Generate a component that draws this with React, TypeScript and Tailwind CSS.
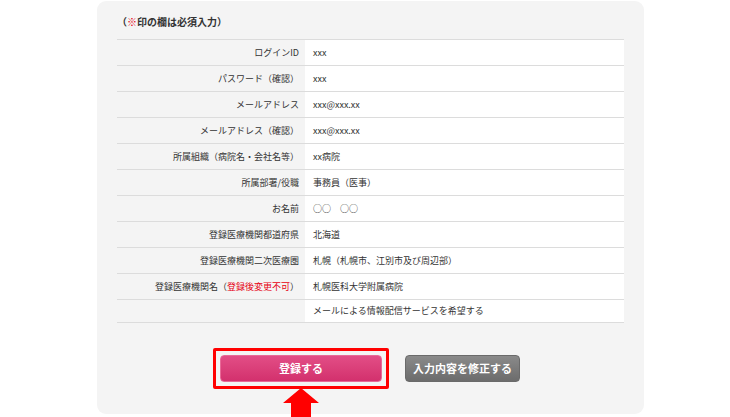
const rows: { label: React.ReactNode; value: string; h?: string }[] = [
  { label: "ログインID", value: "xxx" },
  { label: "パスワード（確認）", value: "xxx" },
  { label: "メールアドレス", value: "xxx@xxx.xx" },
  { label: "メールアドレス（確認）", value: "xxx@xxx.xx" },
  { label: "所属組織（病院名・会社名等）", value: "xx病院" },
  { label: "所属部署/役職", value: "事務員（医事）" },
  { label: "お名前", value: "○○　○○" },
  { label: "登録医療機関都道府県", value: "北海道" },
  { label: "登録医療機関二次医療圏", value: "札幌（札幌市、江別市及び周辺部）" },
  {
    label: (
      <>
        登録医療機関名（<span className="text-[#e60012]">登録後変更不可</span>）
      </>
    ),
    value: "札幌医科大学附属病院",
  },
  { label: "", value: "メールによる情報配信サービスを希望する", h: "h-[23px]" },
];

export default function App() {
  return (
    <div
      className="relative h-[417px] w-[730px] overflow-hidden bg-white text-[#333]"
      style={{ fontFamily: '"Noto Sans CJK JP", "Noto Sans", sans-serif' }}
    >
      <div className="ml-[97px] mt-px flex w-[547px] flex-col rounded-[9px] bg-[#f4f4f4] px-5 pb-[25px] pt-[14px]">
        <p className="text-[10px] font-bold leading-[14px]">
          （<span className="text-[#e60012]">※</span>印の欄は必須入力）
        </p>
        <div className="mt-[10px] border-t border-[#dcdcdc]">
          {rows.map((r, i) => (
            <div
              key={i}
              className={`grid grid-cols-[188px_1fr] border-b border-[#dcdcdc] text-[9px] ${r.h ?? "h-[26px]"}`}
            >
              <div className="flex items-center justify-end pr-[6px]">{r.label}</div>
              <div className="flex items-center bg-white pl-2">{r.value}</div>
            </div>
          ))}
        </div>
        <div className="mt-[25px] flex items-center justify-center gap-[16px] pr-[8px]">
          <div className="rounded-[2px] border-[3px] border-[#ff0000] p-1">
            <button className="block h-[27px] w-[162px] rounded-[4px] border border-[#e86a98] bg-gradient-to-b from-[#e24d86] to-[#d3306d] text-[11px] font-bold text-white">
              登録する
            </button>
          </div>
          <button className="h-[27px] w-[115px] rounded-[4px] border border-[#6a6a6a] bg-gradient-to-b from-[#8a8a8a] to-[#6c6c6c] text-[11px] font-bold text-white">
            入力内容を修正する
          </button>
        </div>
      </div>
      <svg
        className="absolute left-[283px] top-[388px]"
        width="36"
        height="30"
        viewBox="0 0 36 30"
      >
        <path d="M18 0 L36 15 L28 15 L28 30 L8 30 L8 15 L0 15 Z" fill="#ff0000" />
      </svg>
    </div>
  );
}
